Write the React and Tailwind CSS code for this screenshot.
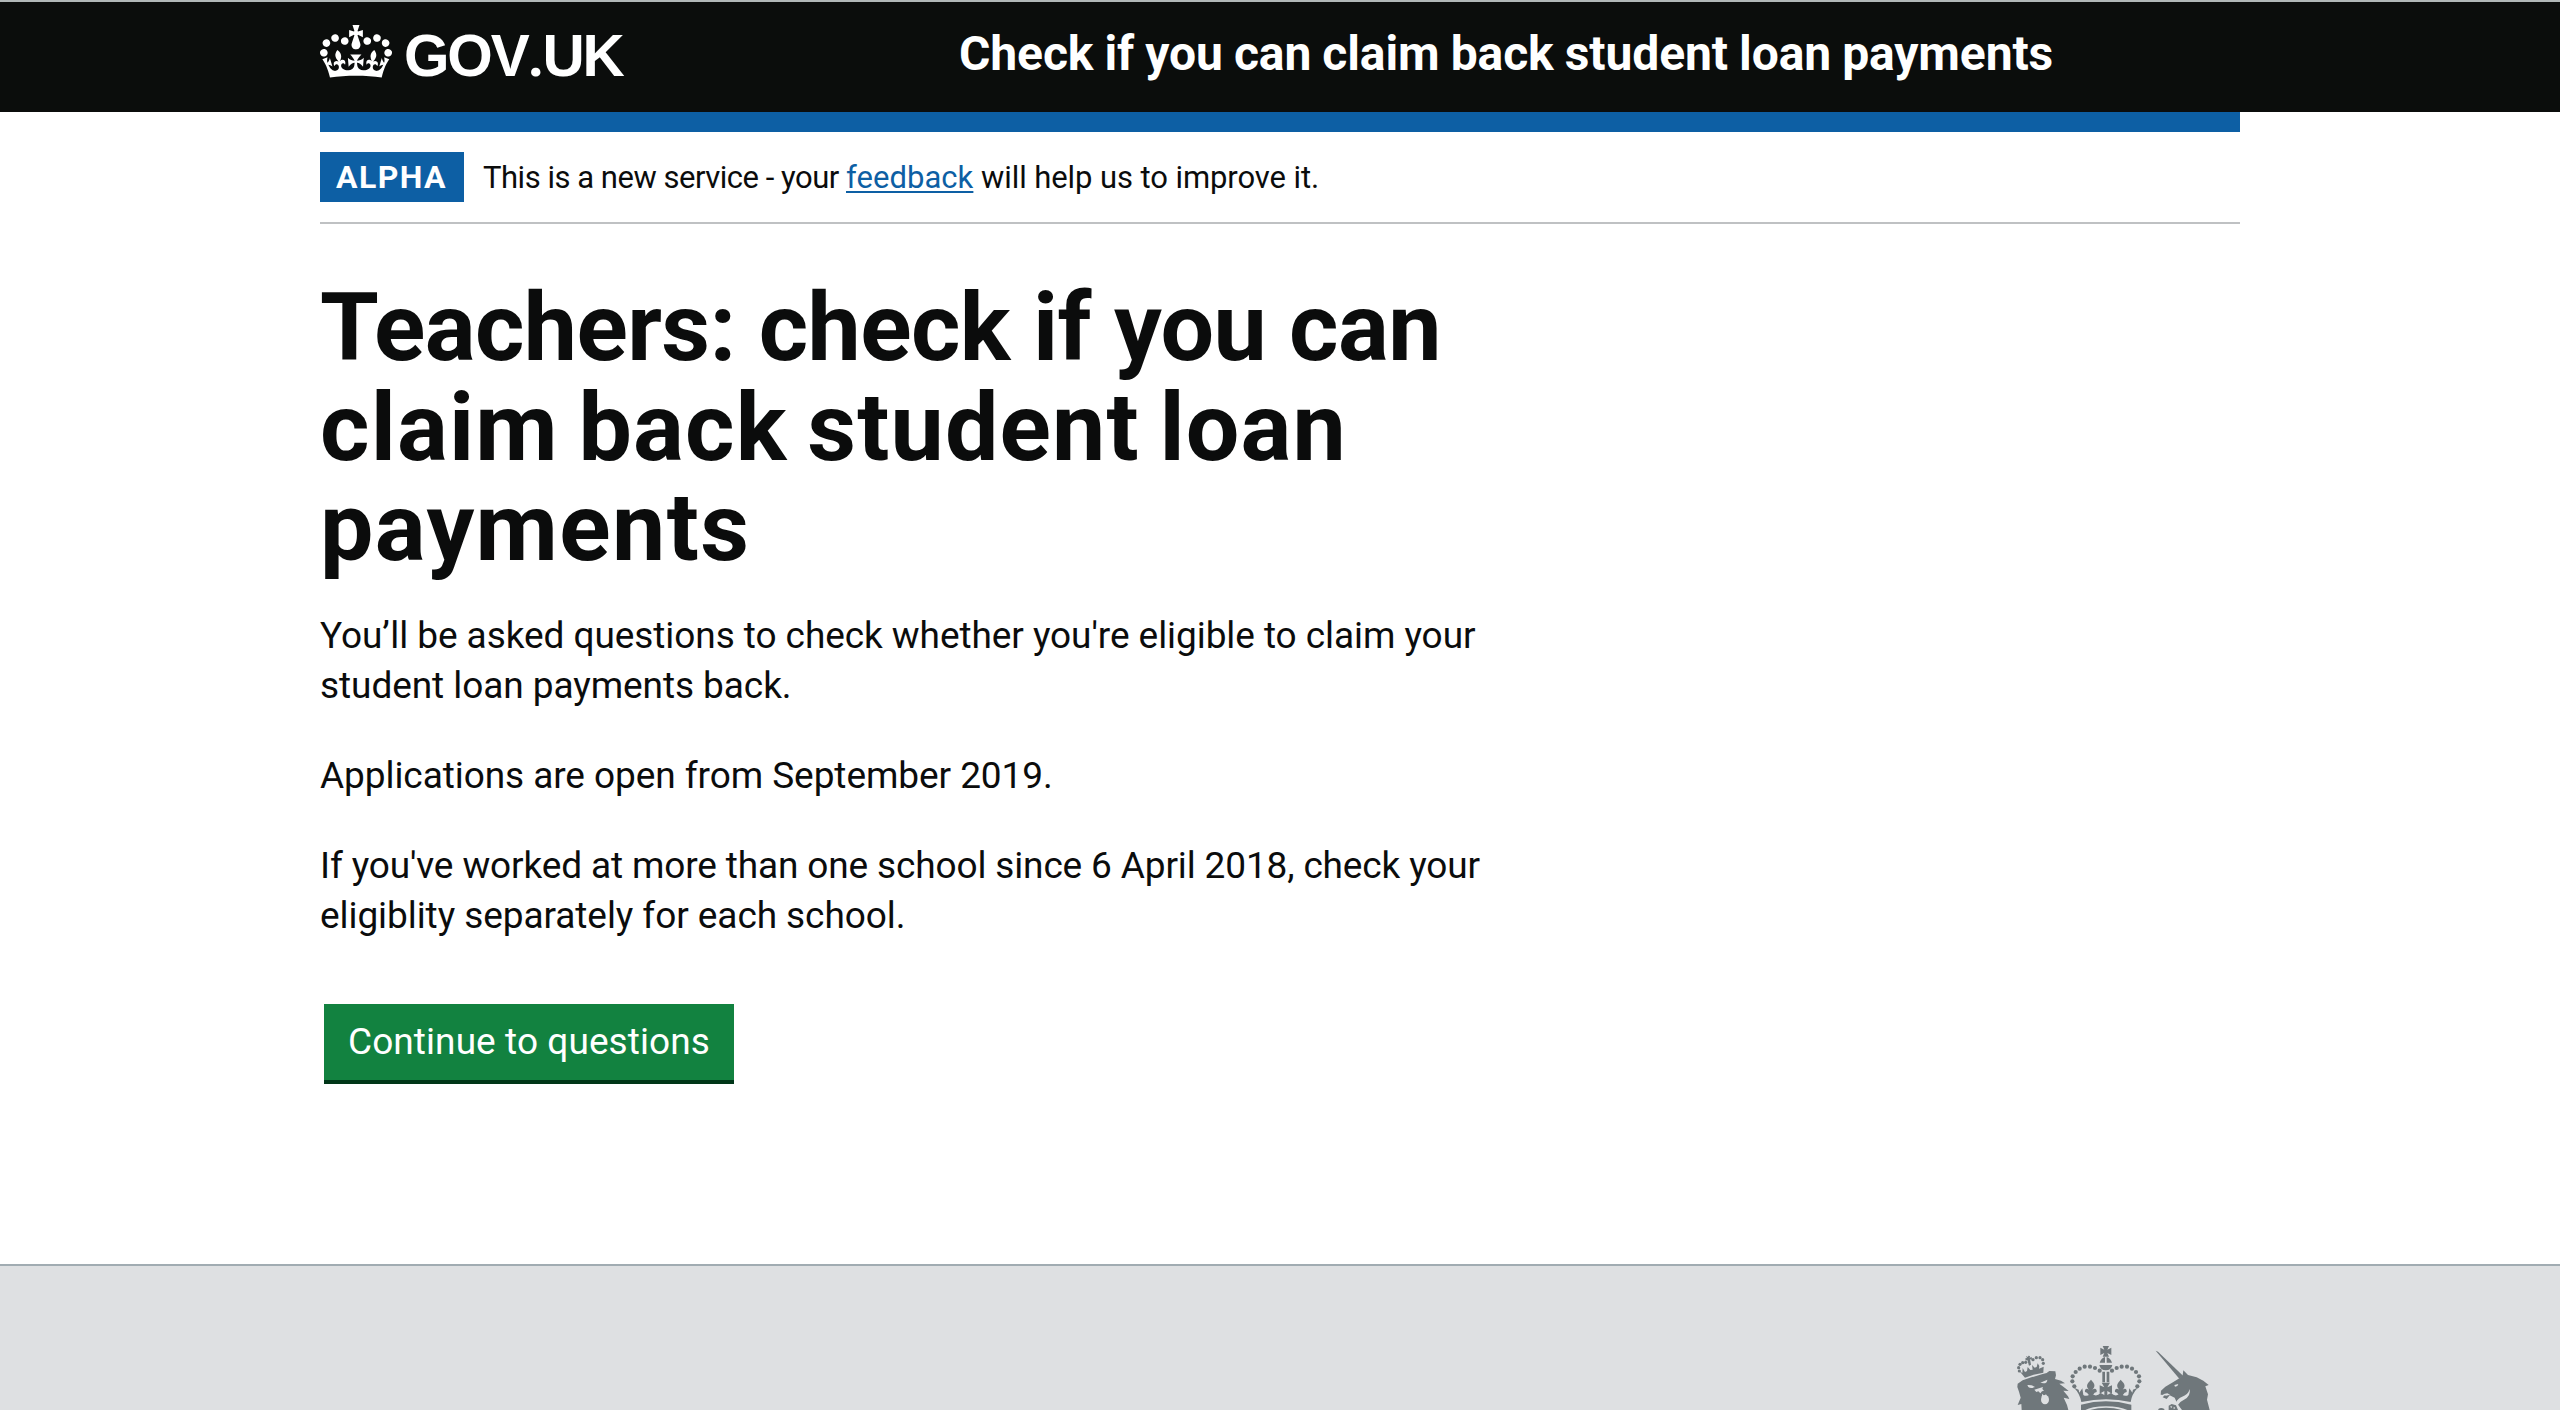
function Crown() {
  return (
    <svg className="block h-[53px] w-[72px] fill-white" viewBox="0 0 132 97" preserveAspectRatio="none" aria-hidden="true">
      <path fillRule="evenodd" d="M25 30.2c3.5 1.5 7.7-.2 9.1-3.7 1.5-3.6-.2-7.8-3.9-9.2-3.6-1.4-7.6.3-9.1 3.9-1.4 3.5.3 7.5 3.9 9zM9 39.5c3.6 1.5 7.8-.2 9.2-3.7 1.5-3.6-.2-7.8-3.9-9.1-3.6-1.5-7.6.2-9.1 3.8-1.4 3.5.3 7.5 3.8 9zM4.4 57.2c3.5 1.5 7.7-.2 9.1-3.8 1.5-3.6-.2-7.7-3.9-9.1-3.5-1.5-7.6.3-9.1 3.8-1.4 3.5.3 7.6 3.9 9.1zm38.3-21.4c3.5 1.5 7.7-.2 9.1-3.8 1.5-3.6-.2-7.7-3.9-9.1-3.6-1.5-7.6.3-9.1 3.8-1.3 3.6.4 7.7 3.9 9.1zm64.4-5.6c-3.6 1.5-7.8-.2-9.1-3.7-1.5-3.6.2-7.8 3.8-9.2 3.6-1.4 7.7.3 9.2 3.9 1.3 3.5-.4 7.5-3.9 9zm15.9 9.3c-3.6 1.5-7.7-.2-9.1-3.7-1.5-3.6.2-7.8 3.7-9.1 3.6-1.5 7.7.2 9.2 3.8 1.5 3.5-.3 7.5-3.8 9zm4.7 17.7c-3.6 1.5-7.8-.2-9.2-3.8-1.5-3.6.2-7.7 3.9-9.1 3.6-1.5 7.7.3 9.2 3.8 1.3 3.5-.4 7.6-3.9 9.1zM89.3 35.8c-3.6 1.5-7.8-.2-9.2-3.8-1.4-3.6.2-7.7 3.9-9.1 3.6-1.5 7.7.3 9.2 3.8 1.4 3.6-.3 7.7-3.9 9.1zM69.7 17.7l8.9 4.7V9.3l-8.9 2.8c-.2-.3-.5-.6-.9-.9L72.4 0H59.6l3.5 11.2c-.3.3-.6.5-.9.9l-8.8-2.8v13.1l8.8-4.7c.3.3.6.7.9.9l-5 15.4v.1c-.2.8-.4 1.6-.4 2.4 0 4.1 3.1 7.5 7 8.1h.2c.3 0 .7.1 1 .1.4 0 .7 0 1-.1h.2c4-.6 7.1-4.1 7.1-8.1 0-.8-.1-1.7-.4-2.4V34l-5.1-15.4c.4-.2.7-.6 1-.9zM66 92.8c16.9 0 32.8 1.1 47.1 3.2 4-16.9 8.9-26.7 14-33.5l-9.6-3.4c1 4.9 1.1 7.2 0 10.2-1.5-1.4-3-4.3-4.2-8.7L108.6 76c2.8-2 5-3.2 7.5-3.3-4.4 9.4-10 11.9-13.6 11.2-4.3-.8-6.3-4.6-5.6-7.9 1-4.7 5.7-5.9 8-.5 4.3-8.7-3-11.4-7.6-8.8 7.1-7.2 7.9-13.5 2.1-21.1-8 6.1-8.1 12.3-4.5 20.8-4.7-5.4-12.1-2.5-9.5 6.2 3.4-5.2 7.9-2 7.2 3.1-.6 4.3-6.4 7.8-13.5 7.2-10.3-.9-10.9-8-11.2-13.8 2.5-.5 7.1 1.8 11 7.3L80.2 60c-4.1 4.4-8 5.3-12.3 5.4 1.4-4.4 8-11.6 8-11.6H55.5s6.4 7.2 7.9 11.6c-4.2-.1-8-1-12.3-5.4l1.4 16.4c3.9-5.5 8.5-7.7 10.9-7.3-.3 5.8-.9 12.8-11.1 13.8-7.2.6-12.9-2.9-13.5-7.2-.7-5 3.8-8.3 7.1-3.1 2.7-8.7-4.6-11.6-9.4-6.2 3.7-8.5 3.6-14.7-4.6-20.8-5.8 7.6-5 13.9 2.2 21.1-4.7-2.6-11.9.1-7.7 8.8 2.3-5.5 7.1-4.2 8.1.5.7 3.3-1.3 7.1-5.7 7.9-3.5.7-9-1.8-13.5-11.2 2.5.1 4.7 1.3 7.5 3.3l-4.7-15.4c-1.2 4.4-2.7 7.2-4.3 8.7-1.1-3-.9-5.3 0-10.2l-9.5 3.4c5 6.9 9.9 16.7 14 33.5 14.8-2.1 30.8-3.2 47.7-3.2z" />
    </svg>
  );
}

const ARCH_BEADS = [[253, 394], [247, 379], [248, 364], [257, 351], [269, 341], [284, 335], [300, 335], [315, 339], [329, 347]];
const LION_BEADS = [[88, 348], [86, 338], [90, 328], [98, 323], [107, 322], [129, 314], [139, 308], [150, 308], [158, 314], [160, 325]];

function Arms() {
  return (
    <svg className="block h-[67px] w-[200px]" viewBox="60 264 600 201" aria-hidden="true">
      <g fill="#6f777b">
        {/* lion */}
        {LION_BEADS.map(([x, y]) => <circle key={`${x}-${y}`} cx={x} cy={y} r="4.8" />)}
        <path d="M108 303l6 3 1-4 5 1-1 5 6-2 1 8-6-1 3 16-6 3-5-17-5 2-1-7 5-1z" />
        <path d="M88 348l9 6 1-15 7 12 6-3 2-12 8 9 7-1-2-14 8 8 6-2 3-11 5 8-1 8 14-6-1 18-29 6-26 9z" />
        <path d="M98 376l26-9 34-10 12-3 8-6 18 1 2 12-3 11 18 5 12 8-17 1 18 14 10 8-16-1 14 17 4 8-17-4 10 22 4 15H95l-1-18-11 3 9-22-5-18-5-14 1-10z" />
        {/* royal crown */}
        {ARCH_BEADS.map(([x, y]) => (
          <g key={`${x}-${y}`}>
            <circle cx={x} cy={y} r="6.3" />
            <circle cx={695 - x} cy={y} r="6.3" />
          </g>
        ))}
        <path d="M338 273h19l-5 11 12-6v22l-12-6 5 11h-19l5-11-12 6v-22l12 6z" />
        <path d="M345 306v17h-16q4-13 16-17zM350 306v17h16q-4-13-16-17z" />
        <path d="M328 330h39q-3 16-19.500 16T328 330z" />
        <path d="M337 350h8v32h-8zM350 350h8v32h-8z" />
        <path d="M335 383h25l-8 14 14-6v25l-14-8v15h-9v-15l-14 8v-25l14 6z" />
        <path d="M303 374c13 14 13 20 4 30 8-6 15-2 13 7l-6 2-8 10h-7l-8-10-6-2c-2-9 5-13 12-7-9-10-8-16 6-30z" />
        <path d="M392 374c-13 14-13 20-4 30-8-6-15-2-13 7l6 2 8 10h7l8-10 6-2c2-9-5-13-12-7 9-10 8-16-6-30z" />
        <path d="M252 398l14 6 2 9 9-13 3 20q9 6 20-2l8 0q12 8 24-4l15 8 16-8q12 12 24 4l8 0q11 8 20 2l3-20 9 13 2-9 14-6q-18 20-21 43-74-16-148 0-4-25-22-43z" />
        <path d="M273 449q74-20 151 0v16h-12q-22-10-64-11-44 1-62 11h-13z" />
        <path d="M300 465q48-14 96 0z" />
        {/* unicorn */}
        <path d="M497 287l7 3 75 72-11 9z" />
        <path d="M568 370l10-9 2-15 14 14 26 7 20 10 16 13-10 4 8 24-3 16 8 31h-83l-14-19-8-18-15-7-9 11-12-5 7-7-13-1 1-12 13-12 24-14z" />
        <path d="M505 462q8-6 18 0v3h-18zM536 452l9-5 13 4 6 14h-28z" />
      </g>
      <g fill="#dee0e2">
        <path d="M112 390q14-1 23 6-13 6-20 0zM151 383l21-9q0 11-12 11zM133 404l14-4 12-4-2 6 5 5-6 2-5 6-6-6-6 2z" />
        <ellipse cx="165" cy="434" rx="12" ry="14" />
        <path d="M157 416l6 8 5-7 3 10h-16z" />
        <path d="M599 402q4 22-17 32-14 6-20 18l-5-9q8-14 18-17 20-7 24-24zM553 390l12-3-3 6-7 2zM518 418l14-3 8 4-12 3z" />
        <path d="M541 452l6 3-4 5zM551 455l5 4-5 4z" />
      </g>
    </svg>
  );
}

export default function App() {
  return (
    <div className="flex h-[1410px] flex-col overflow-hidden bg-white font-['Roboto',sans-serif] text-[#0b0c0c]">
      <header className="h-[112px] shrink-0 border-t-2 border-[#b1b7b7] bg-[#0b0d0c] text-white">
        <div className="mx-auto flex h-full w-[1920px]">
          <a className="flex w-[639px] items-start pt-[23px]">
            <Crown />
            <span className="mt-px ml-3 inline-block origin-left scale-x-[0.975] font-['Liberation_Sans',sans-serif] text-[60px] leading-[60px] font-bold tracking-[-2.2px]">
              GOV<span className="font-['Roboto',sans-serif]">.</span>UK
            </span>
          </a>
          <span className="pt-[22px] text-[48px] leading-[60px] font-bold tracking-[-0.1px] [word-spacing:-0.7px]">
            Check if you can claim back student loan payments
          </span>
        </div>
      </header>

      <div className="mx-auto w-[1920px] grow">
        <div className="h-5 bg-[#0d5fa4]" />
        <div className="flex h-[92px] items-start border-b-2 border-[#bfc1c3] pt-5">
          <strong className="h-[50px] w-[144px] bg-[#0d5fa4] pl-4 text-[32px] leading-[50px] font-bold tracking-[1.42px] text-white">ALPHA</strong>
          <p className="mt-px ml-[19px] text-[31px] leading-[50px] whitespace-nowrap">
            <span className="tracking-[-0.48px]">This is a new service - your </span>
            <a className="tracking-[0.05px] text-[#0d5fa4] underline decoration-2 underline-offset-[3px]">feedback</a>
            <span className="tracking-[-0.08px]"> will help us to improve it.</span>
          </p>
        </div>

        <main className="pt-[54px]">
          <h1 className="flex flex-col text-[95px] leading-[100px] font-bold whitespace-nowrap">
            <span className="tracking-[-0.6px]">Teachers: check if you can</span>
            <span className="tracking-[1.15px] [word-spacing:-5px]">claim back student loan</span>
            <span className="tracking-[1.4px]">payments</span>
          </h1>
          <div className="mt-[33px] flex flex-col gap-10 text-[37px] leading-[50px] tracking-[-0.07px] whitespace-nowrap">
            <p>You’ll be asked questions to check whether you're eligible to claim your<br />student loan payments back.</p>
            <p>Applications are open from September 2019.</p>
            <p><span className="tracking-[-0.14px]">If you've worked at more than one school since 6 April 2018, check your</span><br />eligiblity separately for each school.</p>
          </div>
          <button className="mt-[63px] ml-1 block h-20 w-[410px] border-b-4 border-[#003618] bg-[#128240] pl-6 text-left text-[37px] leading-[76px] tracking-[0.08px] text-white">
            Continue to questions
          </button>
        </main>
      </div>

      <footer className="h-[146px] shrink-0 border-t-2 border-[#a1acb2] bg-[#dee0e2]">
        <div className="mx-auto flex w-[1920px] justify-end pt-[77px] pr-[30px]">
          <Arms />
        </div>
      </footer>
    </div>
  );
}
